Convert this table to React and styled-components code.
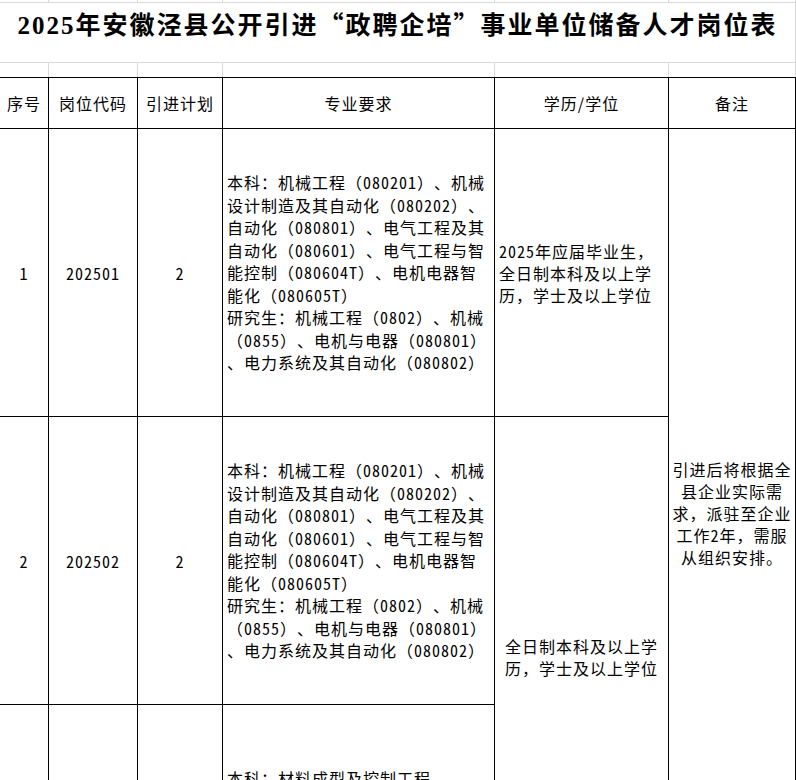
import React from 'react';
import styled, { createGlobalStyle } from 'styled-components';

const COLS = '48px 88px 84px 271px 173px 126px';
const GRID = '#d9d9d9';

const GlobalStyle = createGlobalStyle`
  html, body {
    margin: 0;
    padding: 0;
    background: #fff;
  }
  body {
    font-family: "Noto Sans CJK SC", "Noto Sans", sans-serif;
    color: #000;
    text-spacing-trim: space-all;
  }
`;

const Sheet = styled.div`
  width: 796px;
  display: flex;
  flex-direction: column;
`;

const GridBand = styled.div`
  display: grid;
  grid-template-columns: ${COLS};
  column-gap: 1px;
  padding-right: 1px;
  background: ${GRID};
  height: ${(p) => p.$h}px;
  border-bottom: ${(p) => (p.$line ? `1px solid ${GRID}` : 'none')};
`;

const Blank = styled.div`
  background: #fff;
`;

const TitleBar = styled.div`
  height: 60px;
  border-bottom: 1px solid ${GRID};
  border-right: 1px solid ${GRID};
  display: flex;
  justify-content: center;
  align-items: flex-start;
  padding-top: 5px;
  box-sizing: border-box;
  background: #fff;
`;

const Title = styled.h1`
  margin: 0;
  font-family: "Noto Sans CJK SC", sans-serif;
  font-weight: 700;
  font-size: 25px;
  line-height: 30px;
  letter-spacing: 2px;
  white-space: nowrap;
`;

const Numeral = styled.span`
  font-family: "Liberation Serif", serif;
  font-weight: 700;
`;

const Table = styled.div`
  display: grid;
  grid-template-columns: ${COLS};
  grid-template-rows: 50px 287px 287px 192px;
  gap: 1px;
  padding: 0 1px 1px 0;
  border-top: 1px solid #000;
  background: #000;
`;

const HeadCell = styled.div`
  background: #fff;
  display: flex;
  align-items: center;
  justify-content: center;
  font-size: 16px;
  letter-spacing: 1px;
  white-space: nowrap;
`;

const Cell = styled.div`
  background: #fff;
  display: flex;
  flex-direction: column;
  justify-content: center;
  align-items: ${(p) => (p.$align === 'left' ? 'flex-start' : 'center')};
  padding-left: ${(p) => (p.$align === 'left' ? '4px' : '0')};
  grid-row: ${(p) => (p.$span ? `span ${p.$span}` : 'auto')};
  font-size: 16px;
  letter-spacing: 1px;
  line-height: ${(p) => p.$lh || 22}px;
  overflow: hidden;
`;

const Line = styled.div`
  white-space: nowrap;
`;

// digits in the sheet are half-width, like the SimSun original
const Num = styled.span`
  font-feature-settings: "hwid" 1;
`;

function withNums(text) {
  return text.split(/([0-9]+T?)/).map((part, i) =>
    /^[0-9]/.test(part) ? <Num key={i}>{part}</Num> : part
  );
}

const majorLines = [
  '本科：机械工程（080201）、机械',
  '设计制造及其自动化（080202）、',
  '自动化（080801）、电气工程及其',
  '自动化（080601）、电气工程与智',
  '能控制（080604T）、电机电器智',
  '能化（080605T）',
  '研究生：机械工程（0802）、机械',
  '（0855）、电机与电器（080801）',
  '、电力系统及其自动化（080802）',
];

const rows = [
  {
    no: '1',
    code: '202501',
    plan: '2',
    major: majorLines,
    edu: { lines: ['2025年应届毕业生，', '全日制本科及以上学', '历，学士及以上学位'], align: 'left', span: 1 },
  },
  {
    no: '2',
    code: '202502',
    plan: '2',
    major: majorLines,
    edu: { lines: ['全日制本科及以上学', '历，学士及以上学位'], align: 'center', span: 2 },
  },
  {
    no: '3',
    code: '202503',
    plan: '1',
    major: ['本科：材料成型及控制工程', '（080203）、机械电子工程', '（080204）'],
  },
];

const remarks = ['引进后将根据全', '县企业实际需', '求，派驻至企业', '工作2年，需服', '从组织安排。'];

const headers = ['序号', '岗位代码', '引进计划', '专业要求', '学历/学位', '备注'];

function Band({ h, line }) {
  return (
    <GridBand $h={h} $line={line}>
      {headers.map((k) => (
        <Blank key={k} />
      ))}
    </GridBand>
  );
}

function Lines({ items }) {
  return items.map((l, j) => <Line key={j}>{withNums(l)}</Line>);
}

export default function App() {
  return (
    <>
      <GlobalStyle />
      <Sheet lang="zh-CN">
        <Band h={2} line />
        <TitleBar>
          <Title>
            <Numeral>2025</Numeral>年安徽泾县公开引进“政聘企培”事业单位储备人才岗位表
          </Title>
        </TitleBar>
        <Band h={14} />
        <Table>
          {headers.map((h) => (
            <HeadCell key={h}>{h}</HeadCell>
          ))}
          {rows.map((r, i) => (
            <React.Fragment key={r.code}>
              <Cell><Num>{r.no}</Num></Cell>
              <Cell><Num>{r.code}</Num></Cell>
              <Cell><Num>{r.plan}</Num></Cell>
              <Cell $align="left" $lh={22.5}>
                <Lines items={r.major} />
              </Cell>
              {r.edu && (
                <Cell $align={r.edu.align} $span={r.edu.span}>
                  <Lines items={r.edu.lines} />
                </Cell>
              )}
              {i === 0 && (
                <Cell $span={3}>
                  <Lines items={remarks} />
                </Cell>
              )}
            </React.Fragment>
          ))}
        </Table>
      </Sheet>
    </>
  );
}
